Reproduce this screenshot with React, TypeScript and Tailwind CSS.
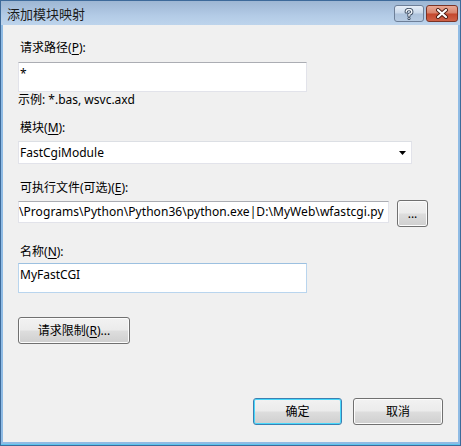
import React from "react";

const font = "font-['Segoe_UI','Noto_Sans','Noto_Sans_CJK_SC',sans-serif]";

// win7 style push button
const Btn: React.FC<{ className?: string; focused?: boolean; children: React.ReactNode }> = ({ className = "", focused, children }) => (
  <div
    className={`h-[27px] rounded-[3px] border flex items-center justify-center text-[12px] text-black bg-[linear-gradient(#f2f2f2_0%,#ebebeb_48%,#dddddd_52%,#cfcfcf_100%)] ${
      focused ? "border-[#3c7fb1] shadow-[inset_0_0_0_1px_#48d8fb]" : "border-[#707070] shadow-[inset_0_0_0_1px_#fcfcfc]"
    } ${className}`}
  >
    {children}
  </div>
);

const Label: React.FC<{ text: string; hot: string; tail?: string; className?: string }> = ({ text, hot, tail = "):", className = "" }) => (
  <div className={`h-4 leading-4 text-[12px] text-black ${className}`}>
    {text}(<span className="underline underline-offset-2">{hot}</span>{tail}
  </div>
);

export default function App() {
  return (
    <div className={`w-[461px] h-[446px] bg-[#3d6a9a] p-px flex flex-col ${font}`}>
      {/* title bar */}
      <div className="h-[24px] flex items-start bg-[linear-gradient(#9db6d3,#b3cbe6_60%,#bdd4ec)]">
        <div className="pl-[6px] pt-[4px] text-[13px] leading-[18px] text-[#1b1b1b]">添加模块映射</div>
        <div className="ml-auto mt-[4px] flex gap-[2px] pr-[2px]">
          <div className="w-[30px] h-[17px] rounded-[3px] border border-[#6d7f98] bg-[linear-gradient(#e6eef8,#c9d8ea_48%,#adc2db_52%,#b7cbe2)] flex items-center justify-center">
            <svg width="10" height="12" viewBox="0 0 10 12">
              <path d="M2.2 4 Q2.2 1.5 5 1.5 Q7.8 1.5 7.8 3.9 Q7.8 5.5 5 6.4 L5 8" fill="none" stroke="#37475c" strokeWidth="3.2" strokeLinecap="round" />
              <path d="M2.2 4 Q2.2 1.5 5 1.5 Q7.8 1.5 7.8 3.9 Q7.8 5.5 5 6.4 L5 8" fill="none" stroke="#f4f7fb" strokeWidth="1.4" strokeLinecap="round" />
              <circle cx="5" cy="10.4" r="1.5" fill="#37475c" />
              <circle cx="5" cy="10.4" r="0.7" fill="#f4f7fb" />
            </svg>
          </div>
          <div className="w-[32px] h-[17px] rounded-[3px] border border-[#7a3426] bg-[linear-gradient(#e9a894,#d7826b_48%,#c4472d_52%,#cf6248)] flex items-center justify-center">
            <svg width="14" height="11" viewBox="0 0 14 11">
              <path d="M3 2 L11 9 M11 2 L3 9" stroke="#4a1a10" strokeWidth="4" strokeLinecap="round" />
              <path d="M3 2 L11 9 M11 2 L3 9" stroke="#ffffff" strokeWidth="2.2" strokeLinecap="round" />
            </svg>
          </div>
        </div>
      </div>

      {/* frame + body */}
      <div className="flex-1 bg-[#8fbbe4] px-[2px] pb-[2px] border-b border-[#5cc6ee] flex flex-col">
        <div className="flex-1 bg-[#f0f0f0] pl-[15px] flex flex-col items-start">
          <Label text="请求路径" hot="P" className="mt-[15px] pl-[2px]" />
          <div className="mt-[6px] w-[289px] h-[30px] bg-white border border-[#e2e3ea] border-t-[#abadb3] pl-px pt-[3px] text-[12px] leading-4">*</div>
          <div className="h-4 leading-4 text-[12px] text-black">示例: *.bas, wsvc.axd</div>

          <Label text="模块" hot="M" className="mt-[12px] pl-[2px]" />
          <div className="mt-[5px] w-[394px] h-[23px] bg-white border border-[#e2e3ea] border-t-[#dcdfe4] flex items-center pl-px pr-[5px] text-[12px]">
            <span>FastCgiModule</span>
            <svg className="ml-auto" width="7" height="4" viewBox="0 0 7 4">
              <path d="M0 0 H7 L3.5 4 Z" fill="#000" />
            </svg>
          </div>

          <Label text="可执行文件(可选)" hot="E" className="mt-[16px] pl-[2px]" />
          <div className="mt-[4px] flex items-start gap-[8px]">
            <div className="mt-px w-[371px] h-[22px] bg-white border border-[#e2e3ea] border-t-[#abadb3] flex items-center overflow-hidden text-[12px] tracking-[0.06px] whitespace-nowrap">
              <span>\Programs\Python\Python36\python.exe|D:\MyWeb\wfastcgi.py</span>
            </div>
            <Btn className="w-[31px] text-[#1a2a60]">...</Btn>
          </div>

          <Label text="名称" hot="N" className="mt-[17px] pl-[2px]" />
          <div className="mt-[3px] w-[289px] h-[30px] bg-white border border-[#b9d5ee] border-t-[#9cc0e0] pl-px pt-[3px] text-[12px] leading-4">MyFastCGI</div>

          <Btn className="mt-[24px] w-[112px]">
            请求限制(<span className="underline underline-offset-2">R</span>)...
          </Btn>

          <div className="mt-[54px] self-stretch flex justify-end gap-[11px] pr-[15px]">
            <Btn focused className="w-[89px]">确定</Btn>
            <Btn className="w-[90px]">取消</Btn>
          </div>
        </div>
      </div>
    </div>
  );
}
